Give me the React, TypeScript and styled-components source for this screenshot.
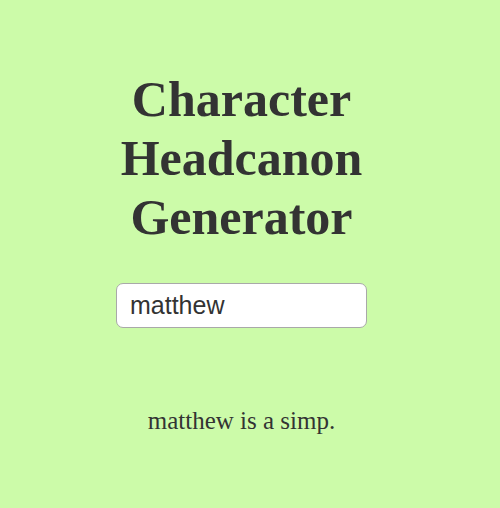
import React, { useState } from "react";
import styled, { createGlobalStyle } from "styled-components";

const Global = createGlobalStyle`
  html, body { margin: 0; padding: 0; background: #ccfba9; }
  body { font-family: "Liberation Serif", "Times New Roman", serif; color: #333; }
`;

const Page = styled.main`
  display: flex;
  flex-direction: column;
  align-items: center;
  padding: 70px 17px 60px 0;
  min-height: 508px;
  box-sizing: border-box;
`;

const Title = styled.h1`
  margin: 0;
  width: 300px;
  text-align: center;
  font-family: "Liberation Serif", "Times New Roman", serif;
  font-weight: bold;
  font-size: 50px;
  line-height: 59px;
  color: #333;
`;

const NameInput = styled.input`
  margin-top: 36px;
  width: 251px;
  height: 45px;
  box-sizing: border-box;
  border: 1.5px solid #a9a9a9;
  border-radius: 7px;
  background: #fff;
  padding: 0 13px;
  font-family: "Liberation Sans", Arial, sans-serif;
  font-size: 25px;
  color: #333;
  outline: none;
`;

const Result = styled.p`
  margin: 78px 0 0;
  font-family: "Liberation Serif", "Times New Roman", serif;
  font-size: 25px;
  line-height: 29px;
  color: #333;
  text-align: center;
`;

export default function App() {
  const [name, setName] = useState("matthew");
  return (
    <>
      <Global />
      <Page>
        <Title>Character Headcanon Generator</Title>
        <NameInput value={name} onChange={(e) => setName(e.target.value)} />
        <Result>{name} is a simp.</Result>
      </Page>
    </>
  );
}
